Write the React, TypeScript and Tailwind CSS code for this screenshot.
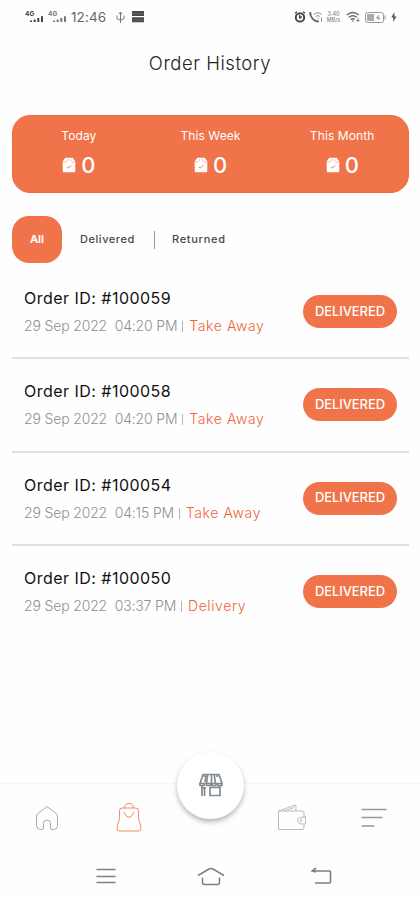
import clsx from 'clsx';

interface TOrder {
  id: string;
  date: string;
  type: string;
}

const ORDERS: TOrder[] = [
  { id: '100059', date: '29 Sep 2022  04:20 PM', type: 'Take Away' },
  { id: '100058', date: '29 Sep 2022  04:20 PM', type: 'Take Away' },
  { id: '100054', date: '29 Sep 2022  04:15 PM', type: 'Take Away' },
  { id: '100050', date: '29 Sep 2022  03:37 PM', type: 'Delivery' },
];

const STATS = ['Today', 'This Week', 'This Month'];

function Signal({ faded }: { faded?: boolean }) {
  return (
    <svg
      width="19"
      height="14"
      viewBox="0 0 19 14"
      className={clsx('shrink-0', faded ? 'text-[#777]' : 'text-[#444]')}
      fill="currentColor"
    >
      <text x="0" y="6" fontSize="6.5" fontWeight="700" fontFamily="Inter, sans-serif">
        4G
      </text>
      <path d="M5 10.5h2V12H5zM8.7 9.5h2V12h-2zM12.3 8h2v4h-2zM16 6.3h2V12h-2z" />
    </svg>
  );
}

function StatusBar() {
  return (
    <div className="h-[34px] flex items-center text-[#666]">
      <div className="ml-[25px] w-[44px] flex gap-x-[4px]">
        <Signal />
        <Signal faded />
      </div>
      <span className="ml-[2px] mt-px w-[45px] text-[13.5px] leading-none tracking-[0.1px]">
        12:46
      </span>
      <svg width="9" height="13" viewBox="0 0 9 13" fill="none" stroke="#777">
        <path d="M4.5 1v11M1 4.5v3.2l3.5 1.6L8 7.7V4.5M3 3l1.5-2L6 3" />
      </svg>
      <svg width="12" height="12" viewBox="0 0 12 12" fill="#4a4a4a" className="ml-[7px]">
        <path d="M0 0h12v5H0zM0 6.3h12v5H0z" />
        <path d="M1 2.7h10M1 9h10" stroke="#888" strokeWidth=".5" />
      </svg>
      <div className="ml-auto mr-[23px] flex items-center">
        <svg width="12" height="12" viewBox="0 0 12 12" fill="none" stroke="#444">
          <circle cx="6" cy="6.4" r="4.2" strokeWidth="2" />
          <path d="M5.600 4v3.500M7 5v2.500" strokeWidth="1.3" />
          <path d="M1 2.3 3 .8M11 2.3 9 .8" strokeWidth="1.2" />
        </svg>
        <svg width="15" height="12" viewBox="0 0 15 12" fill="none" stroke="#666" className="ml-[3px]">
          <path d="M1.3 1.5c0 5 3.4 9 8.4 9M1.3 1v3M6.5 10.2h3" strokeWidth="1.8" />
          <path d="M5 3.5q3.8-3.4 7.6 0M6.8 5.4q2-1.6 4 0M8.8 7v1M12.5 6.5v4" stroke="#888" />
        </svg>
        <div className="ml-[2px] w-[15px] text-center text-[5.5px] leading-[6px] text-[#888] font-medium">
          <div>3.40</div>
          <div>MB/s</div>
        </div>
        <svg width="15" height="12" viewBox="0 0 15 12" fill="none" stroke="#666" className="ml-[5px]">
          <path d="M.8 4q6-5 12 0M2.8 6.3q4-3.2 8 0M4.8 8.4q2-1.4 4 0" strokeWidth="1.4" />
          <path d="M6.8 9v2M12 7v4M10.5 9.5h3" strokeWidth=".8" />
        </svg>
        <svg width="21" height="11" viewBox="0 0 21 11" fill="none" stroke="#999" className="ml-[4px]">
          <rect x=".5" y=".5" width="18" height="10" rx="2" />
          <path d="M2 2h7v7H2z" fill="#aaa" stroke="none" />
          <path d="M20 3.5v4M13.5 3l-2 3.2h3.5M13.8 4.5v3.5" />
        </svg>
        <svg width="6" height="10" viewBox="0 0 6 10" fill="#555" className="ml-[5px]">
          <path d="M3.4 0 .3 5.6h2L2 10l3.6-5.6H3.4z" />
        </svg>
      </div>
    </div>
  );
}

function BoxIcon() {
  return (
    <svg width="14" height="16" viewBox="0 0 14 16">
      <path
        d="M3.2.7h7.600L13.3 4.500V14a1.3 1.3 0 0 1-1.3 1.3H2A1.3 1.3 0 0 1 .7 14V4.500z"
        fill="#fff"
      />
      <path d="M1 5h3.4M9.6 5H13M4.6 4.4 6 2.2M9.4 4.4 8 2.2" stroke="#f5a98c" strokeWidth=".8" />
      <path d="m5 10 1.3 1.2L9.2 8.300" fill="none" stroke="#F27448" strokeWidth="1" />
    </svg>
  );
}

function Stats() {
  return (
    <div className="ml-3 mr-[11px] h-[78px] rounded-[18px] bg-[#F1734A] border border-[#F26B3C] grid grid-cols-3 text-white">
      {STATS.map((label) => (
        <div key={label} className="flex flex-col items-center pt-[11px]">
          <span className="text-[12px] leading-[18px] tracking-[0.1px]">{label}</span>
          <span className="mt-[7px] flex items-center gap-x-[6px] text-[22px] leading-[26px] font-medium">
            <BoxIcon />
            <span className="w-[14px] -ml-px">0</span>
          </span>
        </div>
      ))}
    </div>
  );
}

function Tabs() {
  return (
    <div className="mx-3 mt-[23px] h-[47px] flex items-center text-[11px] font-medium text-[#484848]">
      <div className="w-[50px] h-[47px] flex items-center justify-center rounded-[17px] bg-[#F1734A] text-white font-bold">
        All
      </div>
      <span className="ml-[18px] w-[57px] tracking-[0.55px]">Delivered</span>
      <span className="ml-[17px] w-px h-[18px] bg-[#999]" />
      <span className="ml-[17px] tracking-[0.7px]">Returned</span>
    </div>
  );
}

function Order({ order }: { order: TOrder }) {
  return (
    <div className="h-[93.3px] ml-3 mr-[11px] pl-3 pr-3 border-b-2 border-[#E0E0E0] last:border-transparent flex items-center justify-between">
      <div>
        <div className="text-[16px] leading-[22px] tracking-[0.47px] text-[#111]">
          Order ID: #{order.id}
        </div>
        <div className="mt-[7px] flex text-[14px] leading-[20px] font-light whitespace-pre text-[#909090]">
          <span className="tracking-[-0.15px]">{order.date} </span>
          <span className="mx-[1px] mt-[5px] h-[11px] w-px bg-[#B5B5B5]" />
          <span className="ml-[5px] tracking-[0.6px] text-[#F0643A]">{order.type}</span>
        </div>
      </div>
      <div className="w-[94px] h-[33px] rounded-full bg-[#F1734A] flex items-center justify-center text-white text-[13px] font-medium tracking-[-0.1px]">
        DELIVERED
      </div>
    </div>
  );
}

function BottomNav() {
  return (
    <div className="relative h-[69px] border-t border-[#F5F5F5] bg-[#FEFEFE]">
      <div className="absolute left-[177px] top-[-32px] w-[67px] h-[67px] rounded-full bg-white shadow-[0_3px_5px_rgba(0,0,0,0.28)] flex items-center justify-center">
        <svg width="24" height="24" viewBox="0 0 24 24" fill="none" stroke="#858B92" strokeWidth="1.7" className="-mt-px">
          <path d="M4 1.5h16l3 9H1zM8.800 1.5 7.5 10.500M15.200 1.5l1.300 9" />
          <path d="M3.500 3h3.500L6 9M12.500 2v8M17 3h2.500" />
          <path d="M1 10.500v2h4v-2M7.500 10.500v2h4v-2M13 10.500v2h4v-2M19 10.500v2h4v-2M3 12.500V23M5.500 14v9M3 15h4M11 14.500h10V22.500H11zM21 12v10" />
        </svg>
      </div>
      <div className="flex items-start">
        <svg width="24" height="26" viewBox="0 0 24 26" fill="none" stroke="#AAA" className="ml-[35px] mt-[21px]">
          <path d="M12 1.5 2.5 8.800q-1 1-1 2.5v9.200q0 4 4 4h1.500q1.500 0 1.500-1.500v-5q0-3 3.500-3t3.500 3v5q0 1.500 1.500 1.500h1.500q4 0 4-4v-9.200q0-1.500-1-2.500z" />
        </svg>
        <svg width="26" height="32" viewBox="0 0 26 32" fill="none" stroke="#F08C68" className="ml-[57px] mt-[17px]">
          <path d="M6 7h14q2.500 0 2.500 2.500v7q0 2 1 4.500 1.500 3 1.500 6.500 0 2.500-2 2.500H3q-2 0-2-2.500Q1 24 2.500 21q1-2.500 1-4.500v-7Q3.500 7 6 7z" />
          <path d="M8.500 7q0-4.500 4.500-4.500T17.500 7M8 11q1.500 4.500 5 5.500 3.500-1 5-5.500" />
        </svg>
        <svg width="30" height="28" viewBox="0 0 30 28" fill="none" stroke="#BBB" className="ml-[135px] mt-[20px]">
          <path d="M1.500 7v18.500H25q2 0 2-2V20M27 13.500V9q0-2-2-2H1.500L17 1.500l2 0V7M7 7l10-3.500" />
          <path d="M28.500 12.500v7.500H24q-3.500-.5-3.500-3.500t3.500-3z" />
          <circle cx="23.800" cy="16.500" r="1" />
        </svg>
        <svg width="26" height="20" viewBox="0 0 26 20" fill="none" stroke="#999" strokeWidth="1.500" className="ml-[54px] mt-[24px]">
          <path d="M.5 1.500h25M.5 9.500h21M.5 18h13" />
        </svg>
      </div>
    </div>
  );
}

function SystemNav() {
  return (
    <div className="h-[48px] pt-[14px] flex items-start text-[#808080]">
      <svg width="20" height="18" viewBox="0 0 20 18" stroke="currentColor" strokeWidth="1.6" className="ml-[96px]">
        <path d="M.5 3.500h19M.5 10.500h19M.5 16.500h19" />
      </svg>
      <svg width="28" height="20" viewBox="0 0 28 20" fill="none" stroke="currentColor" strokeWidth="1.500" className="ml-[81px]">
        <path d="m1 9.500 11-6.500q2-1 4 0l11 6.500M5.500 11.500v5q0 2 2 2h13q2 0 2-2v-5" />
      </svg>
      <svg width="22" height="20" viewBox="0 0 22 20" fill="none" stroke="currentColor" strokeWidth="1.600" className="ml-[86px]">
        <path d="M1 5h17.500q1 0 1 1v10q0 1-1 1H4M5 2 1 5l4 1" />
      </svg>
    </div>
  );
}

function App() {
  return (
    <div className="h-[900px] w-[420px] flex flex-col overflow-hidden bg-[#FEFEFE] font-['Inter',sans-serif]">
      <StatusBar />
      <h1 className="h-[81px] pt-[15px] text-center text-[18.500px] leading-[28px] font-light tracking-[0.550px] text-[#222]">
        Order History
      </h1>
      <Stats />
      <Tabs />
      <div className="mt-[3px]">
        {ORDERS.map((order) => (
          <Order key={order.id} order={order} />
        ))}
      </div>
      <div className="mt-auto">
        <BottomNav />
        <SystemNav />
      </div>
    </div>
  );
}

export default App;
